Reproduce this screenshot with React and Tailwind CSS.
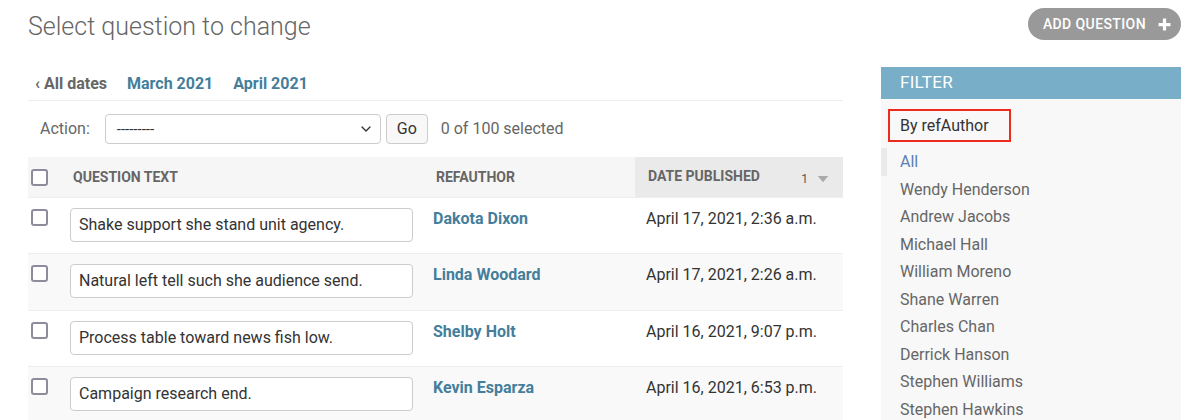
import { ChevronDown } from 'lucide-react';

const rows = [
  { text: 'Shake support she stand unit agency.', author: 'Dakota Dixon', date: 'April 17, 2021, 2:36 a.m.' },
  { text: 'Natural left tell such she audience send.', author: 'Linda Woodard', date: 'April 17, 2021, 2:26 a.m.' },
  { text: 'Process table toward news fish low.', author: 'Shelby Holt', date: 'April 16, 2021, 9:07 p.m.' },
  { text: 'Campaign research end.', author: 'Kevin Esparza', date: 'April 16, 2021, 6:53 p.m.' },
];

const authors = [
  'Wendy Henderson',
  'Andrew Jacobs',
  'Michael Hall',
  'William Moreno',
  'Shane Warren',
  'Charles Chan',
  'Derrick Hanson',
  'Stephen Williams',
  'Stephen Hawkins',
];

function Checkbox() {
  return <div className="size-[17px] rounded-[3px] border-2 border-[#8e8c9c] bg-white" />;
}

function PlusIcon() {
  return (
    <svg viewBox="0 0 12 12" className="size-[13px]" aria-hidden>
      <path d="M6 0.5v11M0.5 6h11" stroke="white" strokeWidth="3" />
    </svg>
  );
}

export default function App() {
  return (
    <div className="h-[420px] overflow-hidden bg-white pl-[28px] pr-[19px] font-['Roboto',sans-serif] text-[#333]">
      <div className="flex items-start justify-between pt-[8px]">
        <h1 className="mt-[3px] text-[25px] font-light leading-[32px] text-[#666]">Select question to change</h1>
        <a className="flex h-[32px] items-center gap-[12px] rounded-full bg-[#999] pl-[15px] pr-[10px] text-[14px] font-medium tracking-[0.4px] text-white">
          ADD QUESTION
          <PlusIcon />
        </a>
      </div>

      <div className="mt-[24px] flex gap-[38px]">
        <div className="w-[815px] shrink-0">
          <div className="flex h-[34px] items-center gap-[20px] border-b border-[#eee] pl-[7px] text-[16px] font-bold">
            <span className="text-[#666]">‹ All dates</span>
            <a className="text-[#447e9b]">March 2021</a>
            <a className="text-[#447e9b]">April 2021</a>
          </div>

          <div className="flex h-[56px] items-center pl-[12px] text-[16px] text-[#666]">
            <span>Action:</span>
            <div className="ml-[15px] flex h-[30px] w-[276px] items-center justify-between rounded-[4px] border border-[#ccc] bg-white pl-[11px] pr-[6px] text-[#333]">
              <span className="text-[15px] leading-none">---------</span>
              <ChevronDown className="size-[16px] text-[#333]" strokeWidth={2} />
            </div>
            <button className="ml-[5px] h-[30px] w-[42px] rounded-[4px] border border-[#ccc] bg-[#f8f8f8] text-[16px] text-[#333]">
              Go
            </button>
            <span className="ml-[13px]">0 of 100 selected</span>
          </div>

          <div className="grid grid-cols-[33px_362px_212px_208px]">
            <div className="flex h-[40px] items-center bg-[#f6f6f6] pl-[3px]">
              <Checkbox />
            </div>
            <div className="flex h-[40px] items-center bg-[#f6f6f6] pl-[12px] text-[14px] font-bold text-[#666]">
              QUESTION TEXT
            </div>
            <div className="flex h-[40px] items-center bg-[#f6f6f6] pl-[13px] text-[14px] font-bold text-[#666]">
              REFAUTHOR
            </div>
            <div className="flex h-[40px] items-center justify-between bg-[#eaeaea] pl-[13px] pr-[14px] text-[14px] font-bold text-[#666]">
              <span className="-mt-[1px]">DATE PUBLISHED</span>
              <span className="mt-[4px] flex items-center gap-[9px] text-[12px] font-normal text-[#555]">
                1
                <svg viewBox="0 0 12 8" className="h-[7px] w-[12px]" aria-hidden>
                  <path d="M0 0h12L6 7z" fill="#aaa" />
                </svg>
              </span>
            </div>

            {rows.map((r, i) => {
              const bg = i % 2 === 1 ? 'bg-[#f9f9f9]' : 'bg-white';
              return (
                <div key={r.author} className="contents">
                  <div className={`h-[56.3px] border-t border-[#eee] pl-[3px] pt-[11px] ${bg}`}>
                    <Checkbox />
                  </div>
                  <div className={`h-[56.3px] border-t border-[#eee] pl-[9px] pt-[10px] ${bg}`}>
                    <div className="flex h-[34px] w-[343px] items-center rounded-[4px] border border-[#ccc] bg-white pl-[8px] text-[16px] text-[#333]">
                      {r.text}
                    </div>
                  </div>
                  <div className={`h-[56.3px] border-t border-[#eee] pl-[10px] pt-[9px] ${bg}`}>
                    <a className="text-[16px] font-bold leading-[20px] text-[#447e9b]">{r.author}</a>
                  </div>
                  <div className={`h-[56.3px] border-t border-[#eee] pl-[11px] pt-[9px] ${bg}`}>
                    <span className="text-[16px] leading-[20px] text-[#333]">{r.date}</span>
                  </div>
                </div>
              );
            })}
          </div>
        </div>

        <div className="h-[400px] w-[300px] shrink-0 bg-[#f8f8f8]">
          <div className="flex h-[32px] items-center bg-[#79aec8] pl-[19px] text-[17px] tracking-[0.3px] text-white">
            FILTER
          </div>
          <div className="ml-[7px] mt-[10px] flex h-[33px] w-[123px] items-center border-2 border-[#ec2b1c] pl-[10px] text-[16px] text-[#333]">
            By refAuthor
          </div>
          <ul className="mt-[6px] text-[16px] leading-[27.5px] text-[#666]">
            <li className="border-l-[6px] border-[#eaeaea] pl-[13px] text-[#5b80b2]">All</li>
            {authors.map((a) => (
              <li key={a} className="pl-[19px]">
                {a}
              </li>
            ))}
          </ul>
        </div>
      </div>
    </div>
  );
}
